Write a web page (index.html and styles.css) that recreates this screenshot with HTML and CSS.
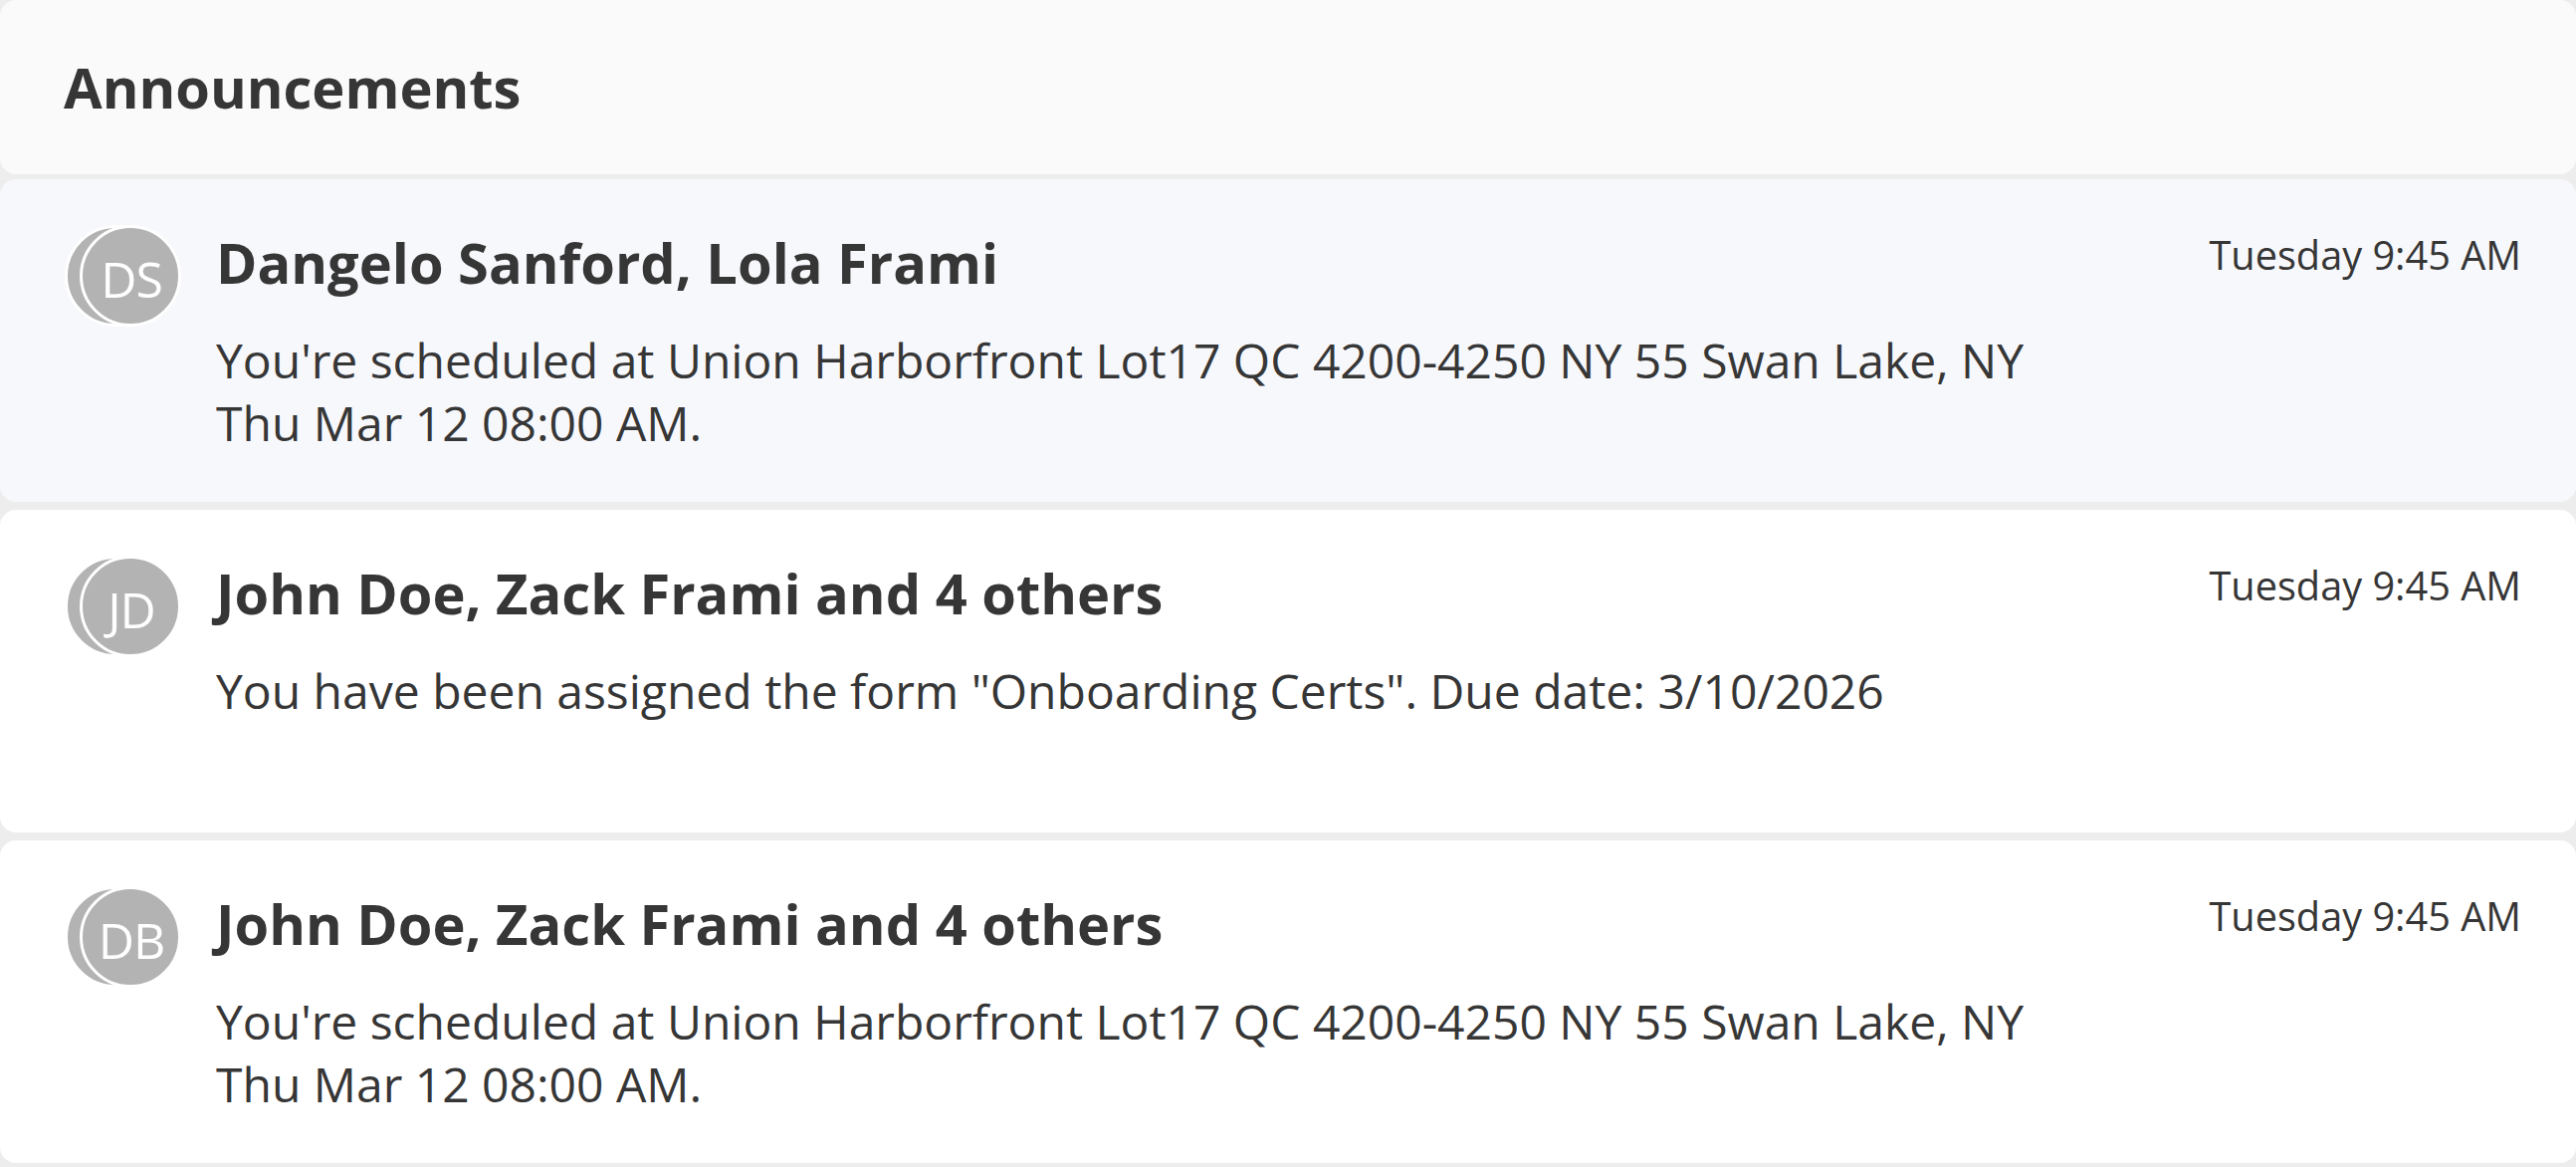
FILE: index.html
```html
<!DOCTYPE html>
<html lang="en">
<head>
<meta charset="utf-8">
<title>Announcements</title>
<link rel="stylesheet" href="styles.css">
</head>
<body>
<div class="page">
  <header class="header">
    <h1 class="header-title">Announcements</h1>
  </header>
  <div class="list">
    <article class="card card-unread">
      <div class="avatar-stack">
        <span class="avatar avatar-back"></span>
        <span class="avatar avatar-front">DS</span>
      </div>
      <div class="content">
        <h2 class="title">Dangelo Sanford, Lola Frami</h2>
        <p class="message">You're scheduled at Union Harborfront Lot17 QC 4200-4250 NY 55 Swan Lake, NY Thu Mar 12 08:00 AM.</p>
      </div>
      <time class="time">Tuesday 9:45 AM</time>
    </article>
    <article class="card">
      <div class="avatar-stack">
        <span class="avatar avatar-back"></span>
        <span class="avatar avatar-front">JD</span>
      </div>
      <div class="content">
        <h2 class="title">John Doe, Zack Frami and 4 others</h2>
        <p class="message">You have been assigned the form "Onboarding Certs". Due date: 3/10/2026</p>
      </div>
      <time class="time">Tuesday 9:45 AM</time>
    </article>
    <article class="card">
      <div class="avatar-stack">
        <span class="avatar avatar-back"></span>
        <span class="avatar avatar-front">DB</span>
      </div>
      <div class="content">
        <h2 class="title">John Doe, Zack Frami and 4 others</h2>
        <p class="message">You're scheduled at Union Harborfront Lot17 QC 4200-4250 NY 55 Swan Lake, NY Thu Mar 12 08:00 AM.</p>
      </div>
      <time class="time">Tuesday 9:45 AM</time>
    </article>
  </div>
</div>
</body>
</html>
```

FILE: styles.css
```css
* { box-sizing: border-box; }

html, body {
  margin: 0;
  padding: 0;
  background: #ededed;
}

body {
  font-family: "Open Sans", "Noto Sans", sans-serif;
  color: #363636;
}

.page {
  display: flex;
  flex-direction: column;
  min-height: 1172px;
}

.header {
  height: 175px;
  background: #fafafa;
  border-radius: 16px;
  display: flex;
  align-items: center;
  padding-left: 64px;
  margin-bottom: 5px;
}

.header-title {
  margin: 0;
  font-size: 56px;
  font-weight: 700;
  line-height: 1;
  color: #363636;
  padding-bottom: 2px;
}

.list {
  display: flex;
  flex-direction: column;
  gap: 8px;
}

.card {
  display: flex;
  align-items: flex-start;
  background: #ffffff;
  border-radius: 16px;
  padding: 46px 55px 47px 65px;
  height: 324px;
}

.card-unread {
  background: #f7f8fc;
}

.avatar-stack {
  display: flex;
  flex: none;
  width: 117px;
  margin-right: 35px;
}

.avatar {
  width: 102px;
  height: 102px;
  border-radius: 50%;
  background: #b3b3b3;
  border: 3px solid #ffffff;
  flex: none;
  display: flex;
  align-items: center;
  justify-content: center;
  color: #ffffff;
  font-size: 50px;
  font-weight: 400;
  line-height: 1;
}

.avatar-front {
  margin-left: -87px;
  padding-top: 5px;
  padding-left: 2px;
  letter-spacing: -1px;
}

.content {
  flex: 1;
  min-width: 0;
  max-width: 1900px;
}

.title {
  margin: 0;
  font-size: 56px;
  font-weight: 700;
  line-height: 74px;
  color: #363636;
}

.message {
  margin: 30px 0 0 0;
  font-size: 48px;
  line-height: 63px;
  min-height: 126px;
  font-weight: 400;
  color: #363636;
}

.time {
  flex: none;
  margin-left: auto;
  margin-top: 3px;
  font-size: 39.7px;
  line-height: 55px;
  color: #363636;
  white-space: nowrap;
}
```
